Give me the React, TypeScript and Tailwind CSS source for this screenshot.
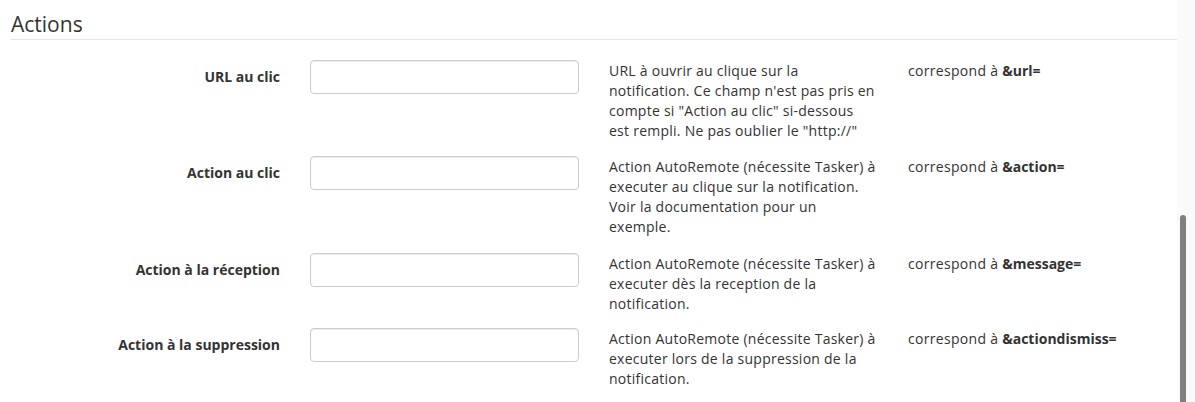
const rows = [
  {
    label: "URL au clic",
    desc: 'URL à ouvrir au clique sur la notification. Ce champ n\'est pas pris en compte si "Action au clic" si-dessous est rempli. Ne pas oublier le "http://"',
    param: "&url=",
    gap: "mb-[15px]",
  },
  {
    label: "Action au clic",
    desc: "Action AutoRemote (nécessite Tasker) à executer au clique sur la notification. Voir la documentation pour un exemple.",
    param: "&action=",
    gap: "mb-[16px]",
  },
  {
    label: "Action à la réception",
    desc: "Action AutoRemote (nécessite Tasker) à executer dès la reception de la notification.",
    param: "&message=",
    gap: "mb-[14px]",
  },
  {
    label: "Action à la suppression",
    desc: "Action AutoRemote (nécessite Tasker) à executer lors de la suppression de la notification.",
    param: "&actiondismiss=",
    gap: "mb-[14px]",
  },
];

function FieldRow({ label, desc, param, gap }: (typeof rows)[number]) {
  return (
    <div className={`flex items-start ${gap}`}>
      <label className="w-[280px] shrink-0 pt-[7px] text-right font-bold leading-[20px]">
        {label}
      </label>
      <input
        type="text"
        className="ml-[30px] h-[34px] w-[269px] shrink-0 rounded-[4px] border border-[#ccc] bg-white px-3 shadow-[inset_0_1px_1px_rgba(0,0,0,0.075)] outline-none"
      />
      <p className="ml-[30px] w-[268px] shrink-0 pt-px leading-[20px] tracking-[0.25px]">
        {desc}
      </p>
      <p className="ml-[31px] pt-px leading-[20px]">
        <span className="tracking-[0.3px]">correspond à </span>
        <b>{param}</b>
      </p>
    </div>
  );
}

export default function App() {
  return (
    <div
      className="flex h-[402px] w-[1195px] overflow-hidden bg-white text-[14px] text-[#333]"
      style={{ fontFamily: '"Open Sans", "Noto Sans", Arial, sans-serif' }}
    >
      <div className="w-[1177px] shrink-0">
        {/* Section title */}
        <div className="mt-[9px] ml-[11px] mb-[20px] border-b border-[#e5e5e5] text-[21px] leading-[30px]">
          Actions
        </div>

        {rows.map((r) => (
          <FieldRow key={r.label} {...r} />
        ))}
      </div>

      {/* Scrollbar */}
      <div className="flex-1 bg-[#fafafa] pt-[215px] pl-[3px]">
        <div className="h-[200px] w-[6px] rounded-t-[3px] bg-[#808080]" />
      </div>
    </div>
  );
}
